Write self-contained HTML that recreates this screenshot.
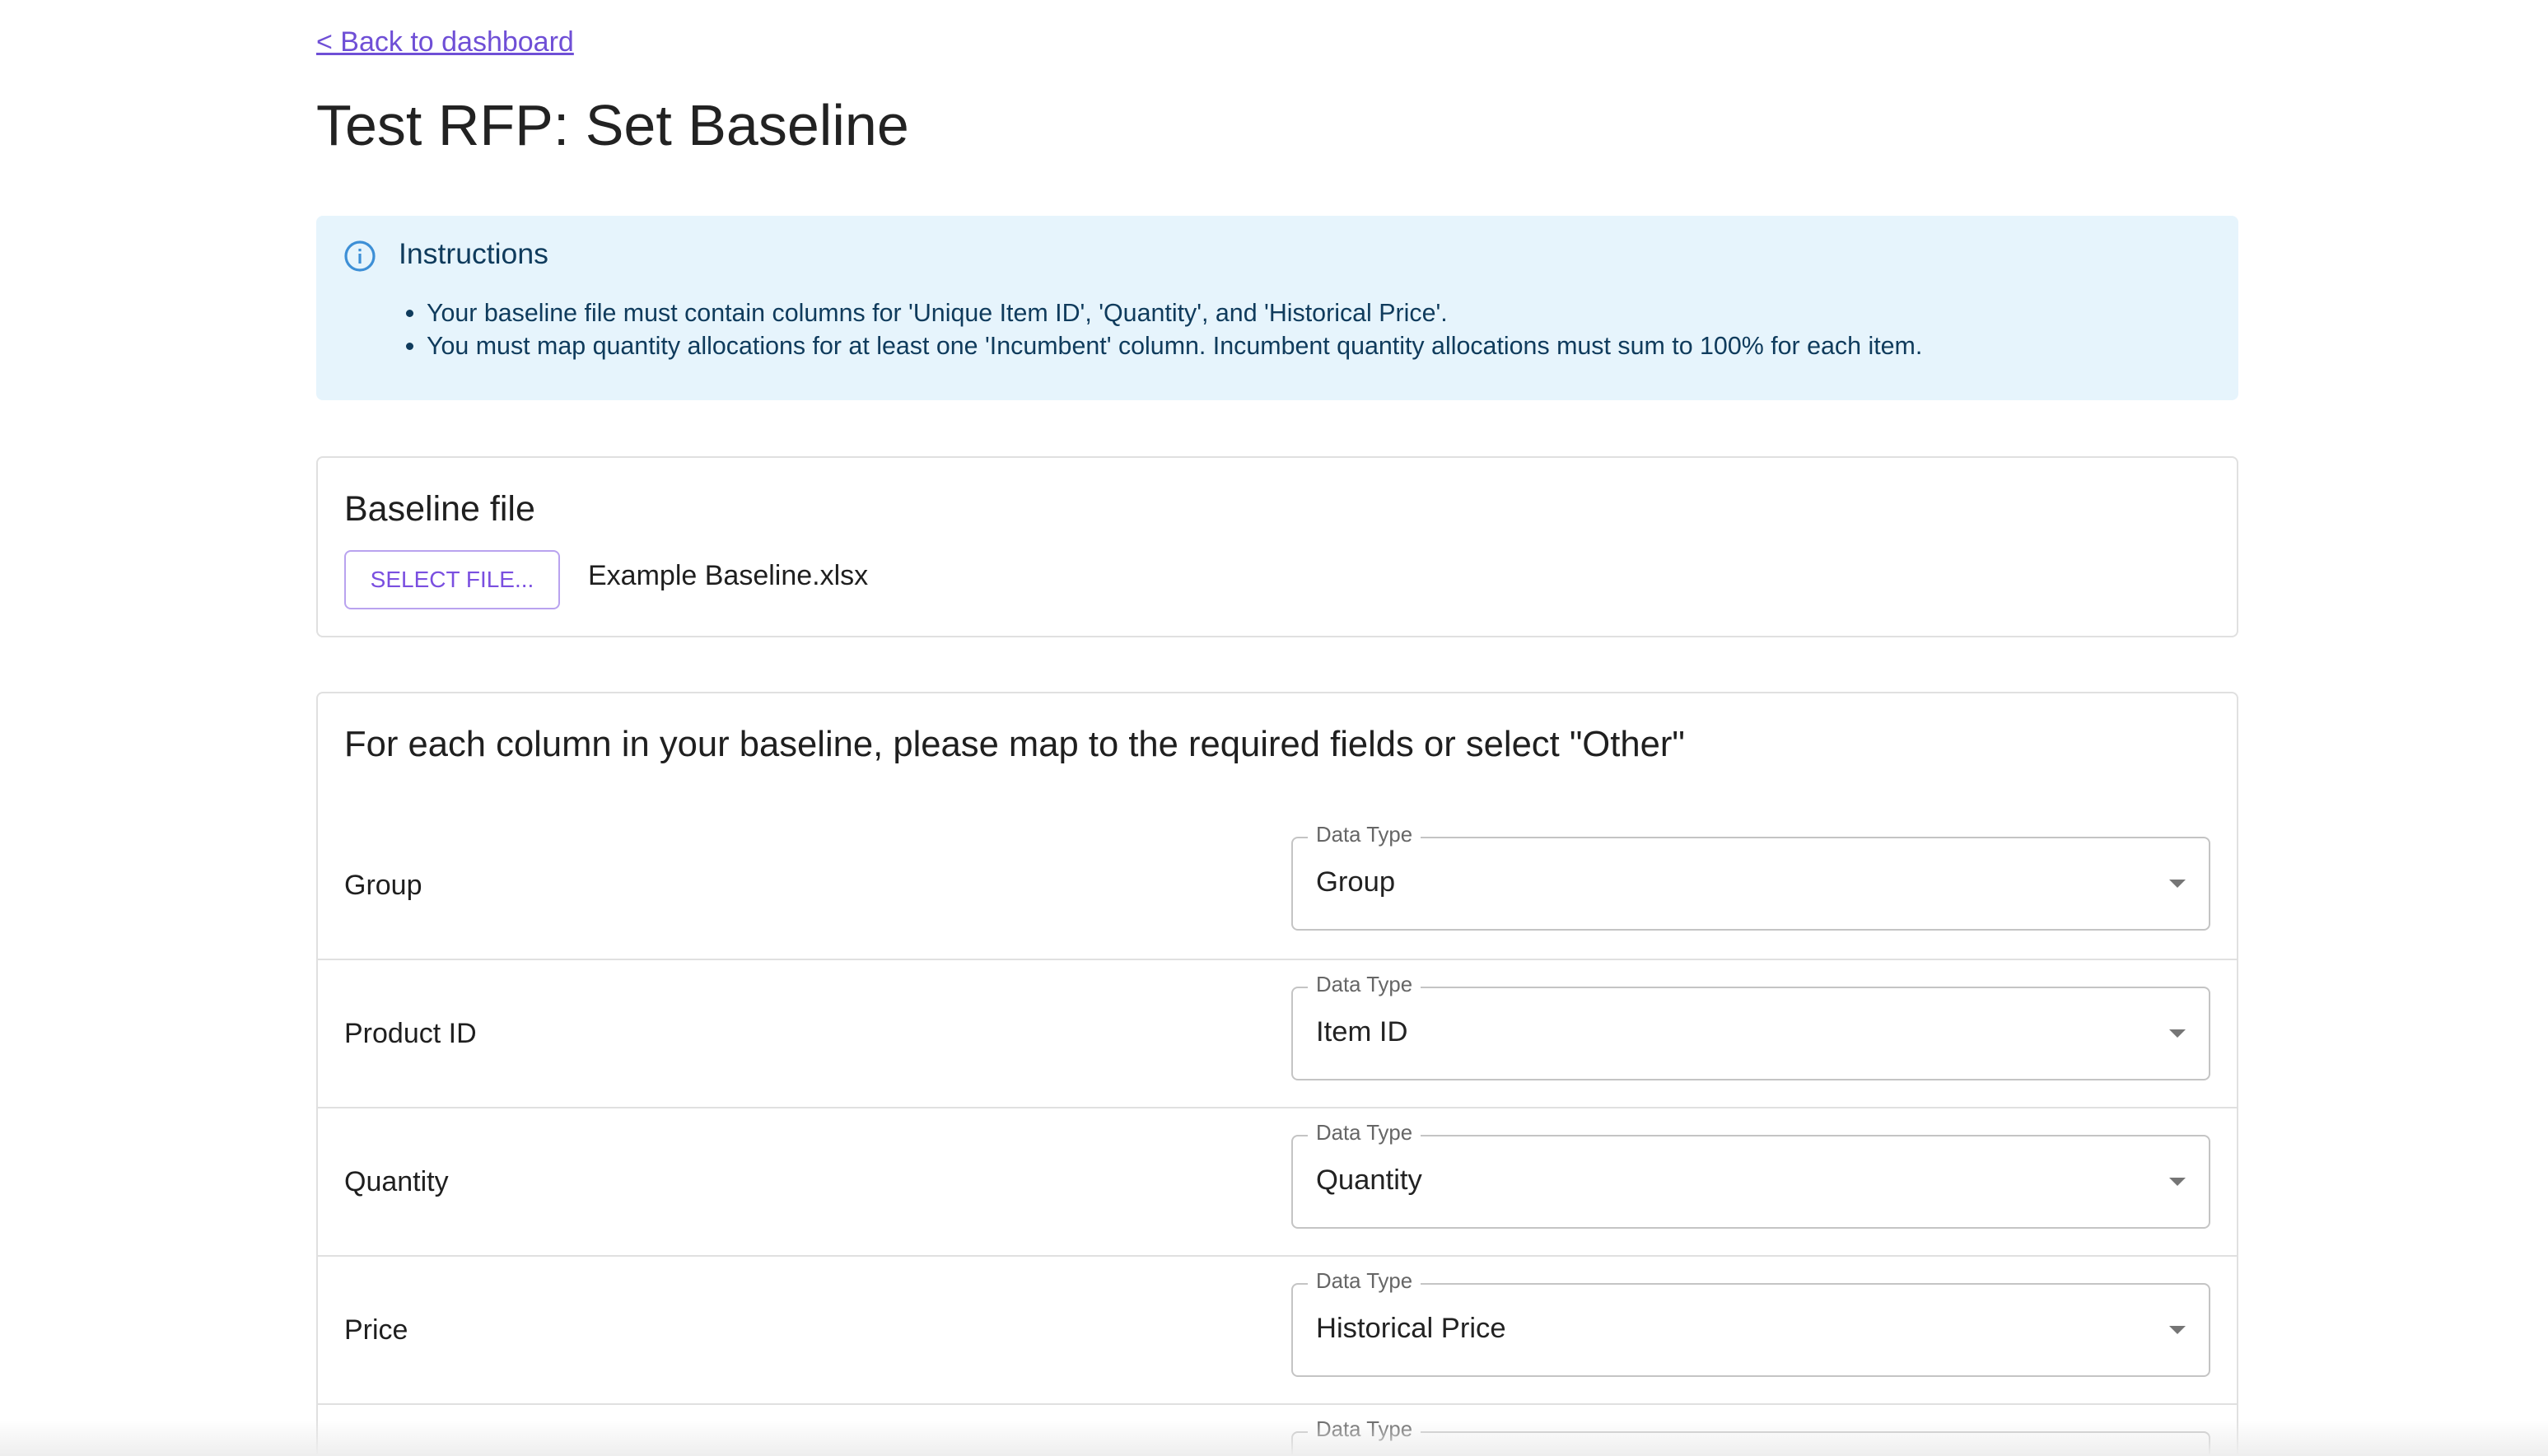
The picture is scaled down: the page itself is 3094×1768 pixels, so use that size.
<!DOCTYPE html>
<html><head><meta charset="utf-8">
<style>
html{zoom:2;height:884px;overflow:hidden}
body{margin:0;background:#fff;font-family:"Liberation Sans",Arial,sans-serif;color:#1f1f1f;width:1547px;height:884px;overflow:hidden;position:relative}
.a{position:absolute}
.back{left:192px;top:16px;font-size:17px;color:#6f4fd6;text-decoration:underline}
h1{position:absolute;left:192px;top:56px;margin:0;font-size:35px;font-weight:400;color:#222}
.info{left:192px;top:131px;width:1167px;height:112px;background:#e6f4fc;border-radius:4px}
.info .t{left:50px;top:13px;font-size:17.8px;color:#0f3b5c}
.info ul{position:absolute;left:50px;top:49px;margin:0;padding-left:17px;font-size:15.2px;color:#0f3b5c;line-height:20px}
.card{left:192px;width:1165px;border:1px solid #e0e0e0;border-radius:4px;background:#fff}
.btn{left:16px;top:56px;width:129px;height:34px;border:1px solid #b9a3ef;border-radius:4px;color:#7a4fe0;font-size:14px;text-align:center;line-height:34px}
.row{position:absolute;left:0;width:1165px;height:90px;border-top:1px solid #e0e0e0}
.row .l{position:absolute;left:16px;top:44px;font-size:17px}
.sel{position:absolute;left:591px;top:16px;width:556px;height:55px;border:1px solid #c4c4c4;border-radius:4px}
.sel .lb{position:absolute;left:9px;top:-9px;background:#fff;padding:0 5px;font-size:12.9px;color:#666}
.sel .v{position:absolute;left:14px;top:17px;font-size:17.3px;color:#222}
.sel .ar{position:absolute;right:14px;top:25px;width:0;height:0;border-left:5px solid transparent;border-right:5px solid transparent;border-top:5px solid #757575}
.shade{left:0;top:862px;width:1547px;height:22px;background:linear-gradient(#fff0,#eee)}
</style></head><body>
<div class="a back">&lt; Back to dashboard</div>
<h1>Test RFP: Set Baseline</h1>
<div class="a info">
<svg class="a" style="left:16px;top:14px" width="21" height="21" viewBox="0 0 21 21"><circle cx="10.5" cy="10.5" r="8.5" fill="none" stroke="#3d8fd6" stroke-width="1.6"/><rect x="9.7" y="9" width="1.6" height="6" fill="#3d8fd6"/><rect x="9.7" y="6" width="1.6" height="1.6" fill="#3d8fd6"/></svg>
<div class="a t">Instructions</div>
<ul><li>Your baseline file must contain columns for 'Unique Item ID', 'Quantity', and 'Historical Price'.</li><li>You must map quantity allocations for at least one 'Incumbent' column. Incumbent quantity allocations must sum to 100% for each item.</li></ul>
</div>
<div class="a card" style="top:277px;height:108px">
<div class="a" style="left:16px;top:19px;font-size:21.5px">Baseline file</div>
<div class="a btn">SELECT FILE...</div>
<div class="a" style="left:164px;top:62px;font-size:17px">Example Baseline.xlsx</div>
</div>
<div class="a card" style="top:420px;height:464px;overflow:hidden;border-bottom:none;border-radius:4px 4px 0 0">
<div class="a" style="left:16px;top:19px;font-size:21.8px">For each column in your baseline, please map to the required fields or select "Other"</div>
<div class="row" style="top:71px;border-top:none"><div class="l" style="top:36px">Group</div><div class="sel"><span class="lb">Data Type</span><span class="v">Group</span><span class="ar"></span></div></div>
<div class="row" style="top:161px"><div class="l" style="top:35px">Product ID</div><div class="sel"><span class="lb">Data Type</span><span class="v">Item ID</span><span class="ar"></span></div></div>
<div class="row" style="top:251px"><div class="l" style="top:35px">Quantity</div><div class="sel"><span class="lb">Data Type</span><span class="v">Quantity</span><span class="ar"></span></div></div>
<div class="row" style="top:341px"><div class="l" style="top:35px">Price</div><div class="sel"><span class="lb">Data Type</span><span class="v">Historical Price</span><span class="ar"></span></div></div>
<div class="row" style="top:431px"><div class="l" style="top:35px">Description</div><div class="sel"><span class="lb">Data Type</span><span class="v">Other</span><span class="ar"></span></div></div>
</div>
<div class="a shade"></div>
</body></html>
